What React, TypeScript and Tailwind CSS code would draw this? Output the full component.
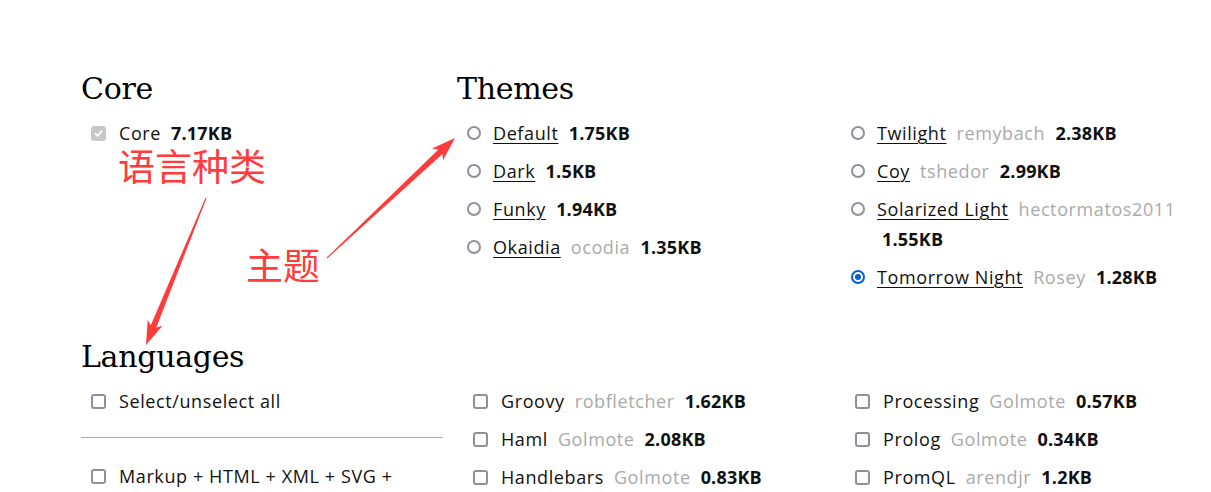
import React from "react";

type Theme = { name: string; author?: string; size: string; checked?: boolean };
type Lang = { name: string; author?: string; size?: string };

const themesLeft: Theme[] = [
  { name: "Default", size: "1.75KB" },
  { name: "Dark", size: "1.5KB" },
  { name: "Funky", size: "1.94KB" },
  { name: "Okaidia", author: "ocodia", size: "1.35KB" },
];

const themesRight: Theme[] = [
  { name: "Twilight", author: "remybach", size: "2.38KB" },
  { name: "Coy", author: "tshedor", size: "2.99KB" },
  { name: "Solarized Light", author: "hectormatos2011", size: "1.55KB" },
  { name: "Tomorrow Night", author: "Rosey", size: "1.28KB", checked: true },
];

const langMid: Lang[] = [
  { name: "Groovy", author: "robfletcher", size: "1.62KB" },
  { name: "Haml", author: "Golmote", size: "2.08KB" },
  { name: "Handlebars", author: "Golmote", size: "0.83KB" },
];

const langRight: Lang[] = [
  { name: "Processing", author: "Golmote", size: "0.57KB" },
  { name: "Prolog", author: "Golmote", size: "0.34KB" },
  { name: "PromQL", author: "arendjr", size: "1.2KB" },
];

const heading = "font-['DejaVu_Serif',serif] text-[30px] leading-none text-black tracking-[-0.3px]";

const Radio = ({ on }: { on?: boolean }) =>
  on ? (
    <span className="mt-[8px] mr-[12px] flex h-[14px] w-[14px] shrink-0 items-center justify-center rounded-full border-2 border-[#0060df]">
      <span className="h-[6px] w-[6px] rounded-full bg-[#0060df]" />
    </span>
  ) : (
    <span className="mt-[8px] mr-[12px] h-[14px] w-[14px] shrink-0 rounded-full border-2 border-[#8f8f9d]" />
  );

const Box = () => (
  <span className="mt-[8px] mr-[13px] h-[15px] w-[15px] shrink-0 rounded-[3px] border-2 border-[#8f8f9d]" />
);

const ThemeRow = ({ t }: { t: Theme }) => (
  <li className="mb-[8px] flex items-start">
    <Radio on={t.checked} />
    <span>
      <span className="whitespace-nowrap underline decoration-1 underline-offset-[3px]">{t.name}</span>
      {t.author && <span className="ml-[10px] text-[#aaaaaa]">{t.author}</span>}{" "}
      <b className="ml-[5px] font-bold tracking-[0.2px]">{t.size}</b>
    </span>
  </li>
);

const LangRow = ({ l }: { l: Lang }) => (
  <li className="mb-[8px] flex items-start">
    <Box />
    <span>
      {l.name}
      {l.author && <span className="ml-[10px] text-[#aaaaaa]">{l.author}</span>}
      {l.size && <b className="ml-[10px] font-bold tracking-[0.2px]">{l.size}</b>}
    </span>
  </li>
);

// tapered annotation arrow, thin at the tail
function arrowPoints(x1: number, y1: number, x2: number, y2: number) {
  const dx = x2 - x1;
  const dy = y2 - y1;
  const len = Math.hypot(dx, dy);
  const ux = dx / len;
  const uy = dy / len;
  const nx = -uy;
  const ny = ux;
  const head = 24;
  const bx = x2 - ux * head;
  const by = y2 - uy * head;
  const p = (x: number, y: number) => `${x.toFixed(1)},${y.toFixed(1)}`;
  return [
    p(x1 + nx * 0.5, y1 + ny * 0.5),
    p(bx + ux * 4 + nx * 3, by + uy * 4 + ny * 3),
    p(bx + nx * 8, by + ny * 8),
    p(x2, y2),
    p(bx - nx * 8, by - ny * 8),
    p(bx + ux * 4 - nx * 3, by + uy * 4 - ny * 3),
    p(x1 - nx * 0.5, y1 - ny * 0.5),
  ].join(" ");
}

export default function App() {
  return (
    <div className="relative h-[492px] w-[1211px] overflow-hidden bg-white font-['Open_Sans',sans-serif] text-[18px] leading-[30px] tracking-[0.6px] text-[#111]">
      <div className="pl-[81px] pt-[74px]">
        <div className="flex">
          <section className="w-[376px] shrink-0">
            <h2 className={heading}>Core</h2>
            <ul className="mt-[14px] pl-[10px]">
              <li className="flex items-start">
                <span className="mt-[8px] mr-[13px] flex h-[15px] w-[15px] shrink-0 items-center justify-center rounded-[3px] bg-[#c8c8cc]">
                  <svg width="11" height="11" viewBox="0 0 12 12" fill="none">
                    <path d="M2.5 6.2l2.4 2.4L9.6 3.4" stroke="#fff" strokeWidth="1.8" strokeLinecap="round" strokeLinejoin="round" />
                  </svg>
                </span>
                <span>
                  Core<b className="ml-[10px] font-bold tracking-[0.2px]">7.17KB</b>
                </span>
              </li>
            </ul>
          </section>
          <section>
            <h2 className={heading}>Themes</h2>
            <div className="mt-[14px] flex">
              <ul className="w-[384px] shrink-0 pl-[10px]">
                {themesLeft.map((t) => (
                  <ThemeRow key={t.name} t={t} />
                ))}
              </ul>
              <ul className="w-[364px] shrink-0 pl-[10px]">
                {themesRight.map((t) => (
                  <ThemeRow key={t.name} t={t} />
                ))}
              </ul>
            </div>
          </section>
        </div>

        <section className="mt-[42px]">
          <h2 className={heading}>Languages</h2>
          <div className="mt-[14px] flex">
            <div className="w-[362px] shrink-0">
              <ul className="pl-[10px]">
                <LangRow l={{ name: "Select/unselect all" }} />
              </ul>
              <hr className="mt-[21px] mb-[23px] border-t border-[#aaaaaa]" />
              <ul className="pl-[10px]">
                <LangRow l={{ name: "Markup + HTML + XML + SVG + MathML + SSML + Atom + RSS" }} />
              </ul>
            </div>
            <ul className="ml-[20px] w-[363px] shrink-0 pl-[10px]">
              {langMid.map((l) => (
                <LangRow key={l.name} l={l} />
              ))}
            </ul>
            <ul className="ml-[20px] w-[363px] shrink-0 pl-[9px]">
              {langRight.map((l) => (
                <LangRow key={l.name} l={l} />
              ))}
            </ul>
          </div>
        </section>
      </div>

      <span className="absolute left-[118px] top-[147px] font-['Noto_Sans_CJK_SC',sans-serif] text-[37px] leading-[37px] tracking-normal text-[#ff3b3b]">
        语言种类
      </span>
      <span className="absolute left-[246px] top-[246px] font-['Noto_Sans_CJK_SC',sans-serif] text-[37px] leading-[37px] tracking-normal text-[#ff3b3b]">
        主题
      </span>
      <svg className="pointer-events-none absolute left-0 top-0" width="1211" height="492">
        <polygon points={arrowPoints(327, 258, 455, 138)} fill="#ff3b3b" />
        <polygon points={arrowPoints(206, 198, 146, 345)} fill="#ff3b3b" />
      </svg>
    </div>
  );
}
